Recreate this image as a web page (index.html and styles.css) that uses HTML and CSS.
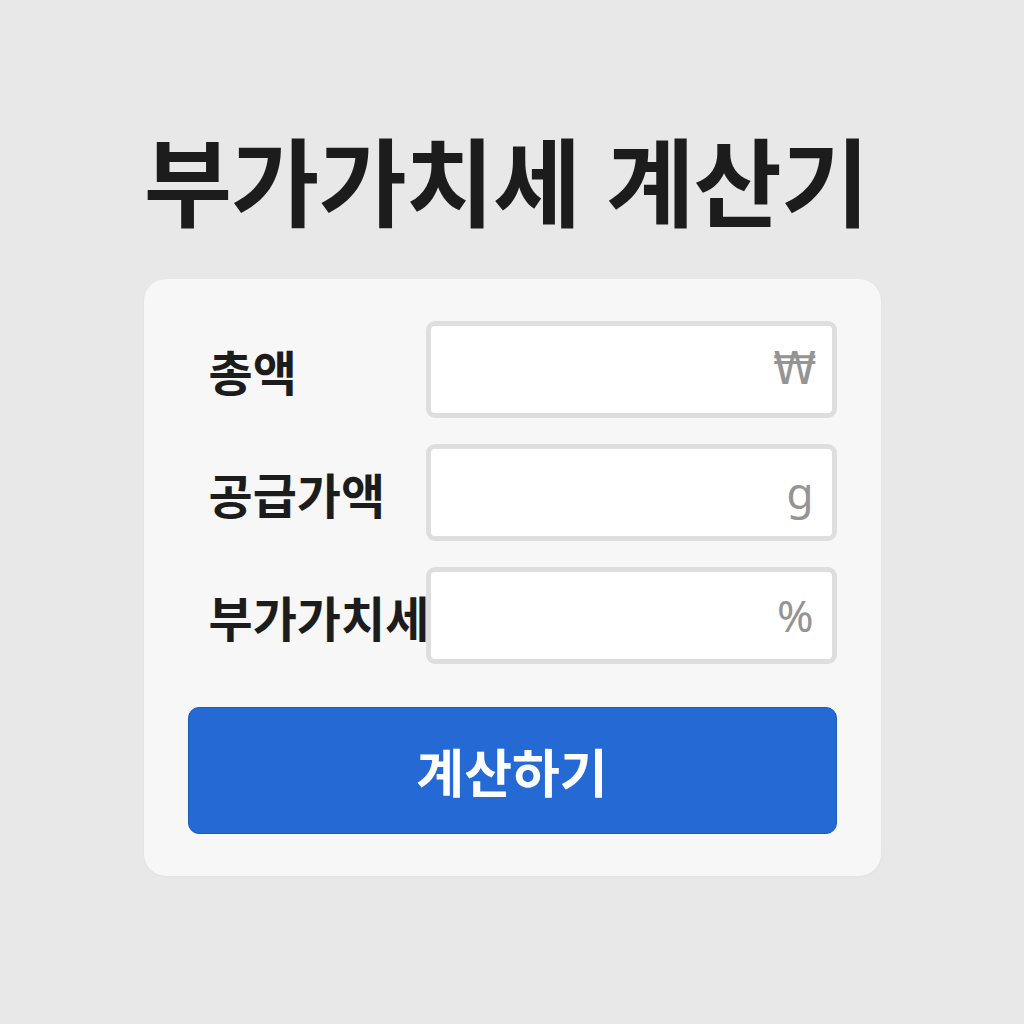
FILE: index.html
```html
<!DOCTYPE html>
<html lang="ko">
<head>
    <meta charset="UTF-8">
    <meta name="viewport" content="width=device-width, initial-scale=1.0">
    <title>부가가치세 계산기</title>
    <link rel="stylesheet" href="styles.css">
</head>
<body>
    <!-- Title -->
    <h1 class="title">부가가치세 계산기</h1>

    <!-- Calculator Card -->
    <div class="calc-card">
        <div class="field-row">
            <label class="field-label" for="total">총액</label>
            <div class="field-box">
                <input type="text" id="total">
                <span class="unit unit-won">₩</span>
            </div>
        </div>

        <div class="field-row">
            <label class="field-label" for="supply">공급가액</label>
            <div class="field-box">
                <input type="text" id="supply">
                <span class="unit">g</span>
            </div>
        </div>

        <div class="field-row">
            <label class="field-label" for="vat">부가가치세</label>
            <div class="field-box">
                <input type="text" id="vat">
                <span class="unit">%</span>
            </div>
        </div>

        <button type="button" class="calc-button">계산하기</button>
    </div>
</body>
</html>
```

FILE: styles.css
```css
/* General Body Styling */
body {
    font-family: "Noto Sans CJK KR", "Noto Sans", sans-serif;
    margin: 0;
    height: 1024px;
    background: #e8e8e8;
    display: flex;
    flex-direction: column;
    align-items: center;
}

/* Title */
.title {
    margin: 116px 0 0 0;
    font-size: 96px;
    font-weight: bold;
    line-height: 124px;
    color: #1c1c1c;
    letter-spacing: -1px;
    transform: translateX(-6px);
}

/* Card */
.calc-card {
    margin-top: 39px;
    width: 737px;
    box-sizing: border-box;
    padding: 42px 44px;
    background: #f7f7f7;
    border-radius: 22px;
    box-shadow: 0 1px 3px rgba(0, 0, 0, 0.04);
}

.field-row {
    display: grid;
    grid-template-columns: 238px 1fr;
    align-items: center;
    margin-bottom: 26px;
}

.field-row:nth-of-type(3) {
    margin-bottom: 43px;
}

.field-label {
    padding-left: 21px;
    font-size: 48px;
    font-weight: bold;
    color: #1c1c1c;
    white-space: nowrap;
    position: relative;
    z-index: 1;
}

.field-box {
    position: relative;
    height: 97px;
    box-sizing: border-box;
    border: 5px solid #dedede;
    border-radius: 9px;
    background: #ffffff;
}

.field-box input {
    width: 100%;
    height: 100%;
    box-sizing: border-box;
    border: none;
    background: transparent;
    outline: none;
    padding: 0 70px 0 16px;
    font-size: 36px;
}

.unit {
    position: absolute;
    right: 18px;
    top: 50%;
    transform: translateY(-52%);
    font-family: "Noto Sans", sans-serif;
    font-size: 44px;
    color: #949494;
}

.unit-won {
    font-family: "DejaVu Sans", sans-serif;
    font-size: 44px;
    right: 15px;
}

/* Button */
.calc-button {
    display: block;
    width: 100%;
    height: 127px;
    border: 1px solid #1b5bc2;
    border-radius: 11px;
    background: #2469d4;
    color: #ffffff;
    font-family: "Noto Sans CJK KR", "Noto Sans", sans-serif;
    font-size: 52px;
    font-weight: bold;
    cursor: pointer;
}
```
